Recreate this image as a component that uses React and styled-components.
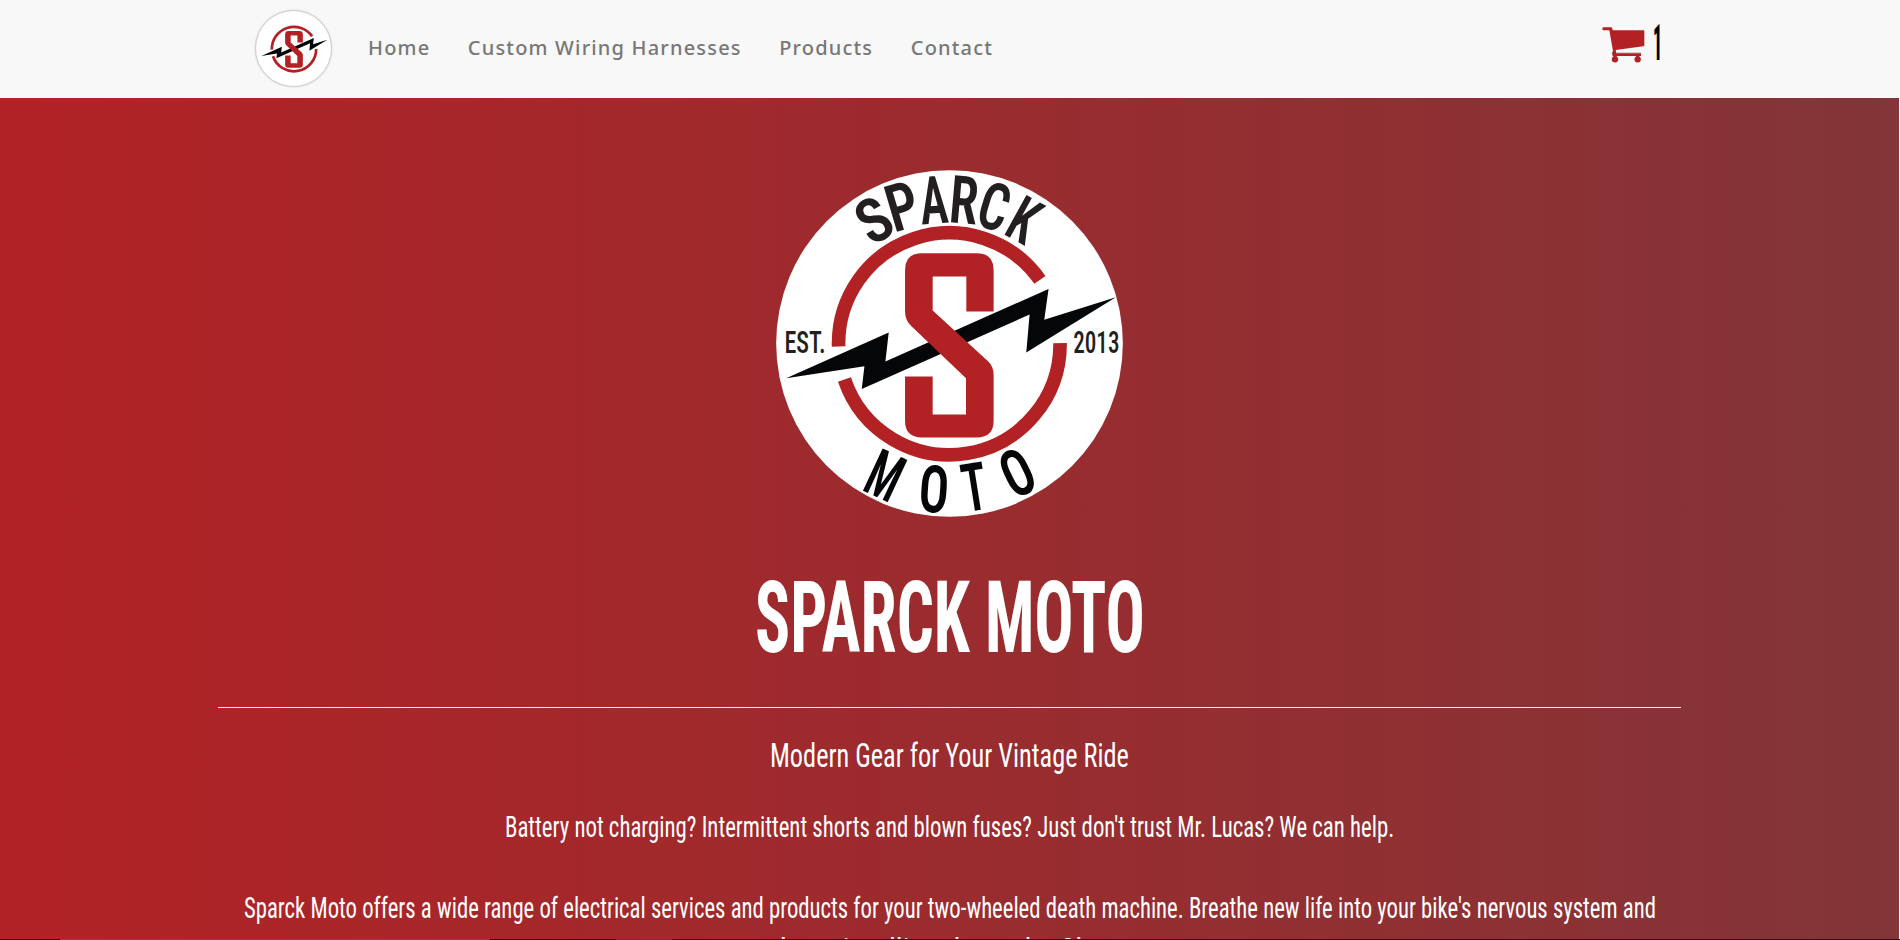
import React, { useLayoutEffect, useRef, useState } from 'react';
import styled, { createGlobalStyle } from 'styled-components';

const RED = '#b22225';
const DISPLAY = 'Roboto, "Open Sans", sans-serif';

const GlobalStyle = createGlobalStyle`
  *, *::before, *::after { box-sizing: border-box; }
  body { margin: 0; background: #fff; overflow: hidden; }
`;

const Page = styled.div`
  display: flex;
  flex-direction: column;
  height: 940px;
  overflow: hidden;
`;

const Navbar = styled.header`
  flex: none;
  height: 98px;
  display: flex;
  justify-content: center;
  background: #f8f8f8;
`;

const NavInner = styled.div`
  width: 1464px;
  padding: 0 20px 0 37px;
  display: flex;
  align-items: flex-start;
`;

const Brand = styled.a`
  display: grid;
  place-items: center;
  width: 77px;
  height: 77px;
  margin: 10px 0 0 0;
  border: 1px solid #cfcfcf;
  border-radius: 50%;
  background: #fff;
  box-shadow: 0 0 2px rgba(0, 0, 0, 0.18);
`;

const NavLinks = styled.nav`
  display: flex;
  gap: 37.5px;
  margin-left: 36px;
  padding-top: 33px;
`;

const NavLink = styled.a`
  font: 500 20px/29px "Noto Sans", "Open Sans", sans-serif;
  letter-spacing: 1.18px;
  color: #777;
  white-space: nowrap;
`;

const Cart = styled.a`
  display: flex;
  gap: 8px;
  margin: 24px 0 0 auto;
  color: #000;
`;

const CartSvg = styled.svg`
  display: block;
  width: 43px;
  height: 36px;
  margin-top: 3px;
`;

const Hero = styled.main`
  flex: 1;
  min-height: 0;
  overflow: hidden;
  margin-right: 1px;
  padding-top: 72px;
  display: flex;
  flex-direction: column;
  align-items: center;
  color: #fff;
  background: linear-gradient(to right, #b22225, #833538);
`;

const LogoSvg = styled.svg`
  display: block;
  flex: none;
  width: ${p => p.$size}px;
  height: ${p => p.$size}px;
`;

const Title = styled.h1`
  margin: 51px 0 39px;
  font: 750 101px/100px ${DISPLAY};
`;

const Rule = styled.hr`
  flex: none;
  width: 1463px;
  height: 1px;
  margin: 0;
  border: 0;
  background: #f7e9e9;
`;

const Tagline = styled.h3`
  margin: 27px 0 0;
  font: 400 34px/40px ${DISPLAY};
`;

const Copy = styled.p`
  margin: ${p => p.$gap}px 0 0;
  font: 400 30px/40px ${DISPLAY};
`;

const CountText = styled.span`
  font: 800 50px/38px ${DISPLAY};
`;

const FitBox = styled.span`
  display: block;
  width: ${p => p.$width}px;
  margin: 0 auto;
`;

const FitInner = styled.span`
  display: inline-block;
  white-space: nowrap;
  font-stretch: 75%;
  transform-origin: 0 50%;
`;

const BottomEdge = styled.footer`
  flex: none;
  height: 1px;
  background: linear-gradient(
    to right,
    #111 60px, #5c5858 60px, #5c5858 490px, #111 490px, #111 616px,
    #444 616px, #444 672px, #1c1c1c 672px
  );
`;

/* Condenses one line of text to the given width. */
function Fit({ width, children }) {
  const ref = useRef(null);
  const [scale, setScale] = useState(1);
  useLayoutEffect(() => {
    setScale(width / ref.current.offsetWidth);
  }, [width, children]);
  return (
    <FitBox $width={width}>
      <FitInner ref={ref} style={{ transform: `scaleX(${scale})` }}>{children}</FitInner>
    </FitBox>
  );
}

const letters = [
  ['S', 341, 180, -30, 94, 132, '#231f20'],
  ['P', 426, 138, -16.5, 94, 140, '#231f20'],
  ['A', 521, 120, -4, 84, 142, '#231f20'],
  ['R', 612, 119, 5, 86, 142, '#231f20'],
  ['C', 703, 139, 17, 88, 140, '#231f20'],
  ['K', 793, 179, 29, 78, 136, '#231f20'],
  ['M', 375, 947, 25, 98, 140, '#040608'],
  ['O', 522, 988, 4, 90, 140, '#040608'],
  ['T', 643, 981, -9, 74, 143, '#040608'],
  ['O', 772, 938, -26, 90, 140, '#040608'],
];

const LogoText = styled.text`
  font-family: ${DISPLAY};
  font-stretch: 75%;
  font-weight: ${p => p.$weight};
`;

function Emblem() {
  return (
    <>
      <g fill="none" stroke={RED} strokeWidth="41">
        <path d="M235.5 560A332.5 332.5 0 0 1 840 360" />
        <path d="M253 659A332.5 332.5 0 0 0 900.500 550" />
      </g>
      <path
        fill="#040608"
        d="M78 655 386 518 376 605 866 387 853 480 1068 412 799 578 809 464 305 688 313 619Z"
      />
      <path
        fill={RED}
        d="M701 455V330Q701 280 651 280H485Q435 280 435 330V455Q435 482 455 500L618 655V764H518V650H435V783Q435 833 485 833H651Q701 833 701 783V645Q701 620 685 605L518 452V350H619V455Z"
      />
    </>
  );
}

function FullLogo() {
  return (
    <LogoSvg $size={347} viewBox="48 30 1041 1042" role="img" aria-label="Sparck Moto">
      <circle cx="568.5" cy="551" r="520.5" fill="#fff" />
      <Emblem />
      {letters.map(([ch, x, y, r, w, h, fill], i) => (
        <LogoText
          key={i}
          $weight={650}
          fill={fill}
          fontSize={h / 0.711}
          y={h / 2}
          textAnchor="middle"
          textLength={w}
          lengthAdjust="spacingAndGlyphs"
          transform={`translate(${x} ${y}) rotate(${r})`}
        >
          {ch}
        </LogoText>
      ))}
      <LogoText $weight={500} fill="#231f20" fontSize="92" x="73" y="579" textLength="124" lengthAdjust="spacingAndGlyphs">EST.</LogoText>
      <LogoText $weight={500} fill="#231f20" fontSize="92" x="940" y="579" textLength="139" lengthAdjust="spacingAndGlyphs">2013</LogoText>
    </LogoSvg>
  );
}

function CartIcon() {
  return (
    <CartSvg viewBox="66 80 129 108" fill={RED}>
      <path d="M70 81H94Q97 81 98 90H190Q193 90 193 93V135Q193 138 190 138L107 149 109 158H183V167H98L96 158 99 152 88 90H70Q67 90 67 86T70 81Z" />
      <path d="M109 156H183V159H109Z" fill="#bbb" />
      <circle cx="105" cy="177" r="9.500" />
      <circle cx="173" cy="177" r="9.500" />
      <path d="M100 165H110V172H100ZM168 165H178V172H168Z" />
    </CartSvg>
  );
}

export default function App() {
  return (
    <Page>
      <GlobalStyle />
      <Navbar>
        <NavInner>
          <Brand>
            <LogoSvg $size={70} viewBox="43 26 1050 1050"><Emblem /></LogoSvg>
          </Brand>
          <NavLinks>
            <NavLink>Home</NavLink>
            <NavLink>Custom Wiring Harnesses</NavLink>
            <NavLink>Products</NavLink>
            <NavLink>Contact</NavLink>
          </NavLinks>
          <Cart>
            <CartIcon />
            <CountText><Fit width={9}>1</Fit></CountText>
          </Cart>
        </NavInner>
      </Navbar>
      <Hero>
        <FullLogo />
        <Title><Fit width={390}>SPARCK MOTO</Fit></Title>
        <Rule />
        <Tagline><Fit width={359}>Modern Gear for Your Vintage Ride</Fit></Tagline>
        <Copy $gap={32}>
          <Fit width={889}>
            Battery not charging? Intermittent shorts and blown fuses? Just don't trust Mr. Lucas? We can help.
          </Fit>
        </Copy>
        <Copy $gap={41}>
          <Fit width={1412}>
            Sparck Moto offers a wide range of electrical services and products for your two-wheeled death machine. Breathe new life into your bike's nervous system and
          </Fit>
        </Copy>
        <Copy $gap={1}>
          <Fit width={340}>keep it rolling down the Shop</Fit>
        </Copy>
      </Hero>
      <BottomEdge />
    </Page>
  );
}
